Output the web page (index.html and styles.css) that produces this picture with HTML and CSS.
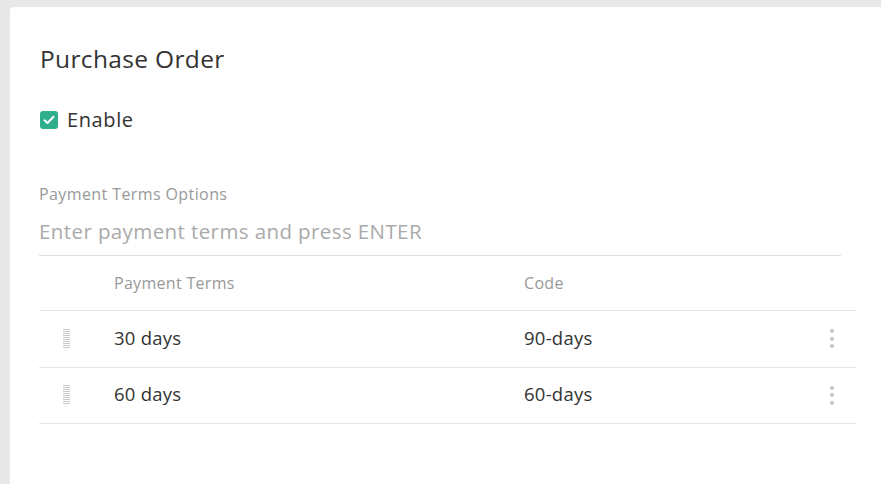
FILE: index.html
```html
<!DOCTYPE html>
<html>
<head>
<meta charset="utf-8">
<link rel="stylesheet" href="styles.css">
</head>
<body>
<div class="card">
  <h1 class="title">Purchase Order</h1>
  <label class="check">
    <span class="box"><svg width="12" height="10" viewBox="0 0 12 10"><path d="M1.5 5.2 L4.5 8 L10.5 1.8" fill="none" stroke="#fff" stroke-width="2" stroke-linecap="round" stroke-linejoin="round"/></svg></span>
    <span>Enable</span>
  </label>
  <div class="field">
    <div class="field-label">Payment Terms Options</div>
    <div class="input">Enter payment terms and press ENTER</div>
  </div>
  <div class="table">
    <div class="row head">
      <div class="handle-cell"></div>
      <div class="c1">Payment Terms</div>
      <div class="c2">Code</div>
      <div class="menu-cell"></div>
    </div>
    <div class="row">
      <div class="handle-cell"><span class="handle"></span></div>
      <div class="c1">30 days</div>
      <div class="c2">90-days</div>
      <div class="menu-cell"><span class="dots"><i></i><i></i><i></i></span></div>
    </div>
    <div class="row">
      <div class="handle-cell"><span class="handle"></span></div>
      <div class="c1">60 days</div>
      <div class="c2">60-days</div>
      <div class="menu-cell"><span class="dots"><i></i><i></i><i></i></span></div>
    </div>
  </div>
</div>
</body>
</html>
```
FILE: styles.css
```css
html, body { margin: 0; padding: 0; }
body {
  background: #e8e8e8;
  font-family: "Open Sans", "Lato", sans-serif;
  color: #333;
  height: 484px;
  overflow: hidden;
}
.card {
  margin: 7px 0 0 10px;
  background: #fff;
  border-top-left-radius: 4px;
  height: 477px;
  padding: 0 25px 0 29px;
  box-sizing: border-box;
}
.title {
  margin: 0;
  padding-top: 35px;
  font-size: 24.5px;
  font-weight: 400;
  line-height: 34px;
  color: #333;
  padding-left: 1px;
  letter-spacing: 0.35px;
}
.check {
  display: flex;
  align-items: center;
  gap: 9px;
  margin-top: 30px;
  font-size: 20px;
  line-height: 28px;
  padding-left: 1px;
  letter-spacing: 0.6px;
}
.box {
  width: 18px; height: 18px;
  border-radius: 3px;
  background: #2fae8b;
  display: flex; align-items: center; justify-content: center;
}
.field { margin-top: 49px; margin-right: 15px; }
.field-label {
  font-size: 16px;
  color: #999;
  line-height: 22px;
  letter-spacing: 0.4px;
}
.input {
  margin-top: 12px;
  font-size: 20.5px;
  color: #aaa;
  line-height: 28px;
  padding-bottom: 10px;
  border-bottom: 1px solid #ddd;
  letter-spacing: 0.4px;
}
.table { margin-top: 0; }
.row {
  display: grid;
  grid-template-columns: 75px 410px 1fr 40px;
  align-items: center;
  box-sizing: border-box;
  height: 57px;
  padding-bottom: 4px;
  border-bottom: 1px solid #e6e6e6;
  font-size: 18.5px;
  letter-spacing: 0.25px;
}
.row:last-child { height: 56px; }
.row.head {
  height: 55px;
  padding-bottom: 0;
  font-size: 16px;
  color: #999;
  letter-spacing: 0.3px;
}
.handle-cell { display: flex; justify-content: flex-start; padding-left: 24px; }
.handle {
  width: 7px; height: 20px;
  margin-top: 3px;
  background: repeating-linear-gradient(to bottom, #c8c8c8 0 1px, transparent 1px 2px);
}
.menu-cell { display: flex; justify-content: flex-start; padding-left: 14px; }
.dots { display: flex; flex-direction: column; gap: 3.5px; margin-top: 3px; }
.dots i { width: 4px; height: 4px; border-radius: 50%; background: #c4c4c4; display: block; }
```
